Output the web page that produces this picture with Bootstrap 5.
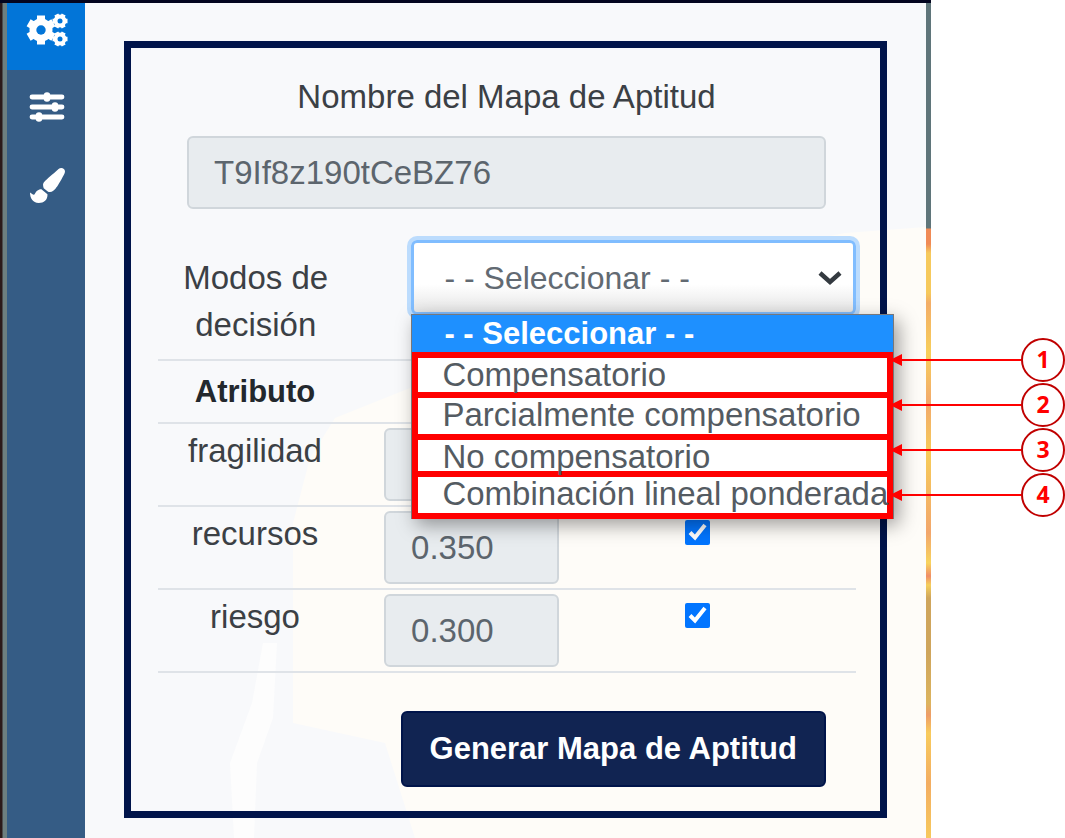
<!DOCTYPE html>
<html lang="es">
<head>
<meta charset="utf-8">
<meta name="viewport" content="width=device-width, initial-scale=1">
<title>Mapa de Aptitud</title>
<link href="https://cdn.jsdelivr.net/npm/bootstrap@5.3.0/dist/css/bootstrap.min.css" rel="stylesheet">
<style>
  :root { --navy: #00144a; --mark-red: #ff0000; --rule: #dfe3e8; }
  body { font-family: "Liberation Sans", Arial, sans-serif; font-size: 33px; line-height: 46px; color: #3b4045; background: #fff; }
  .app-shell { border-top: 3px solid #03051f; background: #f8f9fb; min-width: 0; }
  .edge-left { width: 7px; background: linear-gradient(90deg, #2b1a1a 0 2px, #6d7f80 3px); }
  .edge-right { width: 5px; background: linear-gradient(#5f757a 0 225px, #f08a55 226px 241px, #f6c95c 250px 290px, #f3ad68 300px, #f8cf5a 350px, #f2a96c 400px, #f7cc58 450px, #f2a66c 530px, #f8d45e 560px, #f08d68 573px, #f5cf5c 582px, #cfa55c 595px 650px, #dcb45e 700px, #ee9c68 712px, #f8cb5c 730px, #f3ad62 780px, #f7c95c); }
  .side-nav { width: 78px; background: #355c85; }
  .side-nav a { height: 78px; padding: 0 0 4px 2px; }
  .side-nav a.active { height: 67px; background: #0275d8; padding-bottom: 13px; }
  .backdrop { position: absolute; inset: 0; width: 100%; height: 100%; }
  .work-area { padding: 38px 39px 20px; min-width: 0; }
  .map-panel { position: relative; border: 7px solid var(--navy); padding: 26px 24px 24px 27px; }
  .inset-row { padding: 0 30px 0 29px; }
  .field { font-size: 33px; line-height: 46px; color: #5c656d; border: 2px solid #d0d6db; border-radius: 6px; padding: 12px 25px; height: 73px; }
  .field:disabled { background: #e8ecef; color: #5c656d; opacity: 1; }
  .name-field { margin-top: 16px; }
  .mode-row { margin-top: 31px; height: 119px; }
  .mode-label { width: 28%; line-height: 47px; padding: 14px 20px 0; }
  .mode-box { position: relative; margin-left: 58px; }
  .mode-select { height: 75px; font-size: 32px; line-height: 46px; padding: 12px 60px 12px 30px; color: #626a72; border: 3px solid #80bdff; border-radius: 6px; box-shadow: 0 0 0 4px #bcdcfd;
    background: url("data:image/svg+xml,%3Csvg xmlns='http://www.w3.org/2000/svg' viewBox='0 0 24 16'%3E%3Cpath d='M2 3l10 9L22 3' fill='none' stroke='%23343a40' stroke-width='4.5'/%3E%3C/svg%3E") no-repeat right 11px center / 24px 16px, linear-gradient(#fff 60%, #e6e6e6); }
  .mode-select:focus { box-shadow: 0 0 0 4px #bcdcfd; border-color: #80bdff; }
  .mode-menu { position: absolute; top: 74px; left: 0; right: -38px; z-index: 5; border: 1px solid #77777a; border-bottom: 0; box-shadow: 5px 6px 18px rgba(0,0,0,.38); }
  .mode-current { background: #1e90ff; color: #fff; font-weight: 700; font-size: 31px; line-height: 37px; padding-left: 32px; }
  .mode-list { display: grid; grid-template: 34px 36px 31px 36px / minmax(0, 1fr); gap: 6px; padding: 6px; background: var(--mark-red); }
  .mode-list li { background: #fff; line-height: 34px; padding-left: 24px; white-space: nowrap; color: #545b62; }
  .criteria { table-layout: fixed; border-top: 2px solid var(--rule); }
  .criteria th, .criteria td { border-bottom: 2px solid var(--rule); vertical-align: top; text-align: center; padding: 4px 0; }
  .criteria thead th { font-size: 31px; line-height: 53px; color: #23282d; }
  .criteria tbody th { font-weight: 400; }
  .criteria .weight-cell { padding: 4px 32px; }
  .criteria .tick-cell { padding: 13px 52px 0 0; line-height: 0; }
  .tick { width: 25px; height: 25px; margin: 0; border-radius: 3px; accent-color: #0275ff; }
  .btn-make { margin-top: 38px; height: 76px; background: #112452; border: 2px solid var(--navy); border-radius: 6px; color: #fff; font-weight: 700; font-size: 31px; padding: 0 27px; }
  .btn-make:hover { background: #1b3169; color: #fff; }
  .callouts { width: 134px; padding-top: 338px; }
  .callouts ol { position: relative; z-index: 6; margin: 0 0 0 -41px; padding: 0; list-style: none; display: grid; gap: 1px; }
  .arrow-line { flex: 1; height: 2px; background: var(--mark-red); position: relative; }
  .arrow-line::before { content: ""; position: absolute; left: 0; top: -5px; border: 6px solid transparent; border-left: 0; border-right: 12px solid var(--mark-red); }
  .disc { width: 44px; height: 44px; border: 2px solid #c00000; border-radius: 50%; color: var(--mark-red); font: 700 23px/38px "Open Sans", sans-serif; text-align: center; }
</style>
</head>
<body>
<div class="d-flex min-vh-100">
  <div class="app-shell d-flex flex-grow-1">
    <div class="edge-left flex-shrink-0"></div>
    <nav class="side-nav d-flex flex-column flex-shrink-0" aria-label="Herramientas">
      <a href="#" class="active d-flex align-items-center justify-content-center" aria-label="Configuración">
        <svg width="42" height="34" viewBox="0 0 42 34">
          <g fill="#fff" stroke="#fff">
            <g stroke-width="8"><circle cx="15" cy="17" r="11.5" stroke="none"/>
              <path d="M15 2.5v29M2.6 9.8l24.8 14.4M2.6 24.2L27.4 9.8"/></g>
            <g stroke-width="4.5"><circle cx="34" cy="8" r="6.5" stroke="none"/><path d="M26.5 8h15M30.3 1.5l7.4 13M37.7 1.5l-7.4 13"/>
              <circle cx="34" cy="26" r="6.5" stroke="none"/><path d="M26.5 26h15M30.3 19.5l7.4 13M37.7 19.5l-7.4 13"/></g>
          </g>
          <g fill="#0275d8"><circle cx="15" cy="17" r="4.7"/><circle cx="34" cy="8" r="2.5"/><circle cx="34" cy="26" r="2.5"/></g>
        </svg>
      </a>
      <a href="#" class="d-flex align-items-center justify-content-center" aria-label="Ajustes">
        <svg width="36" height="32" viewBox="0 0 36 32" stroke="#fff" stroke-linecap="round">
          <path d="M3 6h30M3 16h30M3 26h30" stroke-width="4.8"/>
          <path d="M18 4.5v3M26 14.5v3M10 24.5v3" stroke-width="6.5"/>
        </svg>
      </a>
      <a href="#" class="d-flex align-items-center justify-content-center" aria-label="Estilo">
        <svg width="35" height="35" viewBox="0 0 512 512" fill="#fff"><path d="M167.02 309.34c-40.12 2.58-76.53 17.86-97.19 72.3-2.35 6.21-8 9.98-14.59 9.98-11.11 0-45.46-27.67-55.25-34.35C0 439.62 37.93 512 128 512c75.86 0 128-43.77 128-120.19 0-3.11-.65-6.08-.97-9.13l-88.01-73.34zM457.89 0c-15.16 0-29.37 6.71-40.21 16.45C213.27 199.05 192 203.34 192 257.09c0 13.7 3.25 26.76 8.73 38.7l63.82 53.18c7.21 1.8 14.64 3.03 22.39 3.03 62.11 0 98.11-45.47 211.16-256.46 7.38-14.35 13.9-29.85 13.9-45.99C512 20.64 486 0 457.89 0z"/></svg>
      </a>
    </nav>
    <main class="work-area flex-grow-1 position-relative">
      <!-- faint map showing through the panel -->
      <svg class="backdrop" viewBox="0 0 841 835" preserveAspectRatio="none" aria-hidden="true">
        <path d="M841 224L760 230 500 280 350 375 250 415 225 455 208 520 208 720 300 740 330 835H841z" fill="#fefcf8"/>
        <path d="M178 640l14 0-4 75-16 45-3 75h-20l-4-75 22-60z" fill="#fdfdfd"/>
      </svg>
      <form class="map-panel" onsubmit="return false">
        <div class="inset-row text-center">
          <label for="mapName" class="d-block">Nombre del Mapa de Aptitud</label>
          <input id="mapName" type="text" class="form-control field name-field" value="T9If8z190tCeBZ76" disabled>
        </div>
        <div class="mode-row d-flex">
          <label for="mode" class="mode-label text-center">Modos de decisión</label>
          <div class="mode-box flex-grow-1">
            <select id="mode" class="form-select mode-select"><option>- - Seleccionar - -</option></select>
            <div class="mode-menu">
              <div class="mode-current">- - Seleccionar - -</div>
              <ul class="mode-list list-unstyled m-0">
                <li>Compensatorio</li>
                <li>Parcialmente compensatorio</li>
                <li>No compensatorio</li>
                <li>Combinación lineal ponderada</li>
              </ul>
            </div>
          </div>
        </div>
        <table class="criteria w-100">
          <colgroup><col style="width:27.8%"><col style="width:34.2%"><col style="width:38%"></colgroup>
          <thead><tr><th scope="col">Atributo</th><th></th><th></th></tr></thead>
          <tbody>
            <tr>
              <th scope="row">fragilidad</th>
              <td class="weight-cell"><input type="text" class="form-control field" value="0.350" aria-label="Peso fragilidad" disabled></td>
              <td class="tick-cell"><input type="checkbox" class="tick" aria-label="Usar fragilidad" checked></td>
            </tr>
            <tr>
              <th scope="row">recursos</th>
              <td class="weight-cell"><input type="text" class="form-control field" value="0.350" aria-label="Peso recursos" disabled></td>
              <td class="tick-cell"><input type="checkbox" class="tick" aria-label="Usar recursos" checked></td>
            </tr>
            <tr>
              <th scope="row">riesgo</th>
              <td class="weight-cell"><input type="text" class="form-control field" value="0.300" aria-label="Peso riesgo" disabled></td>
              <td class="tick-cell"><input type="checkbox" class="tick" aria-label="Usar riesgo" checked></td>
            </tr>
          </tbody>
        </table>
        <div class="inset-row d-flex justify-content-end">
          <button type="submit" class="btn btn-make">Generar Mapa de Aptitud</button>
        </div>
      </form>
    </main>
    <div class="edge-right flex-shrink-0"></div>
  </div>
  <aside class="callouts flex-shrink-0">
    <ol>
      <li class="d-flex align-items-center"><span class="arrow-line"></span><span class="disc">1</span></li>
      <li class="d-flex align-items-center"><span class="arrow-line"></span><span class="disc">2</span></li>
      <li class="d-flex align-items-center"><span class="arrow-line"></span><span class="disc">3</span></li>
      <li class="d-flex align-items-center"><span class="arrow-line"></span><span class="disc">4</span></li>
    </ol>
  </aside>
</div>
<script src="https://cdn.jsdelivr.net/npm/bootstrap@5.3.0/dist/js/bootstrap.bundle.min.js"></script>
</body>
</html>
